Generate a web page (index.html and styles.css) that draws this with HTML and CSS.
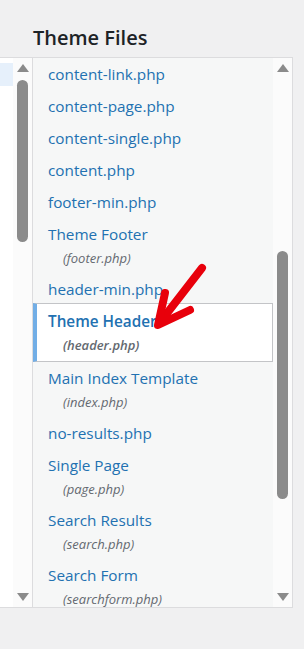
FILE: index.html
```html
<!DOCTYPE html>
<html lang="en">
<head>
    <meta charset="UTF-8">
    <meta name="viewport" content="width=device-width, initial-scale=1.0">
    <title>Theme Files</title>
    <link rel="stylesheet" href="styles.css">
</head>
<body>
    <div class="page">
        <h2 class="files-title">Theme Files</h2>

        <div class="editor-row">
            <!-- edge of the code editor, cut off on the left -->
            <div class="code">
                <div class="code-lines">
                    <div class="line-active"></div>
                </div>
                <div class="scrollbar">
                    <span class="arrow-up"></span>
                    <span class="thumb thumb-left"></span>
                    <span class="spacer"></span>
                    <span class="arrow-down"></span>
                </div>
            </div>

            <!-- file list -->
            <div class="files">
                <ul class="file-list">
                    <li><a href="#">content-link.php</a></li>
                    <li><a href="#">content-page.php</a></li>
                    <li><a href="#">content-single.php</a></li>
                    <li><a href="#">content.php</a></li>
                    <li><a href="#">footer-min.php</a></li>
                    <li class="has-desc"><a href="#">Theme Footer</a><span class="desc">(footer.php)</span></li>
                    <li><a href="#">header-min.php</a></li>
                    <li class="has-desc current"><a href="#">Theme Header</a><span class="desc">(header.php)</span></li>
                    <li class="has-desc"><a href="#">Main Index Template</a><span class="desc">(index.php)</span></li>
                    <li><a href="#">no-results.php</a></li>
                    <li class="has-desc"><a href="#">Single Page</a><span class="desc">(page.php)</span></li>
                    <li class="has-desc"><a href="#">Search Results</a><span class="desc">(search.php)</span></li>
                    <li class="has-desc"><a href="#">Search Form</a><span class="desc">(searchform.php)</span></li>
                </ul>
                <div class="scrollbar">
                    <span class="arrow-up"></span>
                    <span class="thumb thumb-right"></span>
                    <span class="spacer"></span>
                    <span class="arrow-down"></span>
                </div>
            </div>
        </div>

        <!-- red annotation arrow -->
        <svg class="pointer" width="80" height="90" viewBox="0 0 80 90">
            <g fill="none" stroke="#e8000b" stroke-width="8" stroke-linecap="round" stroke-linejoin="round">
                <line x1="62" y1="13" x2="21" y2="66"/>
                <polyline points="25,38 18,70 50,55"/>
            </g>
        </svg>
    </div>
</body>
</html>
```

FILE: styles.css
```css
body {
    margin: 0;
    background-color: #f0f0f1;
    font-family: 'Open Sans', 'Noto Sans', sans-serif;
    color: #1d2327;
}
.page {
    position: relative;
    padding-top: 24px;
    height: 625px;
}
.files-title {
    margin: 0 0 5px 33px;
    font-size: 20px;
    line-height: 28px;
    font-weight: 600;
    color: #1d2327;
}
.editor-row {
    display: flex;
    width: 293px;
    height: 551px;
}
.code {
    display: flex;
    width: 32px;
    background: #fff;
    border-top: 1px solid #dcdcde;
    border-bottom: 1px solid #dcdcde;
}
.code-lines {
    width: 13px;
    padding-top: 5px;
}
.line-active {
    height: 23px;
    background: #e6f0fb;
}
.files {
    display: flex;
    flex: 1;
    background: #f6f7f7;
    border: 1px solid #dcdcde;
    overflow: hidden;
}
.file-list {
    flex: 1;
    margin: 0;
    padding: 0;
    list-style: none;
    overflow: hidden;
}
.file-list li {
    padding: 6px 0 6px 11px;
    border-left: 4px solid transparent;
}
.file-list li.has-desc {
    padding-bottom: 5px;
}
.file-list a {
    display: block;
    font-size: 15.3px;
    line-height: 20px;
    color: #2271b1;
    text-decoration: none;
    white-space: nowrap;
}
.desc {
    display: block;
    margin-top: 4px;
    padding-left: 15px;
    font-size: 13px;
    line-height: 20px;
    font-style: italic;
    color: #646970;
    white-space: nowrap;
}
.file-list li.current {
    background: #fff;
    border: 1px solid #c3c4c7;
    border-left: 4px solid #72aee6;
    margin-top: -2px;
    padding-top: 7px;
    padding-bottom: 6px;
}
.current a,
.current .desc {
    font-weight: 600;
}
.scrollbar {
    display: flex;
    flex-direction: column;
    align-items: center;
    width: 19px;
    padding: 6px 0;
    background: #fbfbfb;
    flex-shrink: 0;
}
.arrow-up,
.arrow-down {
    width: 0;
    height: 0;
    border-left: 6.5px solid transparent;
    border-right: 6.5px solid transparent;
}
.arrow-up {
    border-bottom: 8px solid #8b8b8b;
}
.arrow-down {
    border-top: 8px solid #8b8b8b;
}
.spacer {
    flex: 1;
}
.thumb {
    width: 11px;
    background: #8b8b8b;
    border-radius: 6px;
}
.thumb-left {
    margin-top: 8px;
    height: 162px;
}
.thumb-right {
    margin-top: 179px;
    height: 248px;
}
.pointer {
    position: absolute;
    left: 140px;
    top: 255px;
}
```
